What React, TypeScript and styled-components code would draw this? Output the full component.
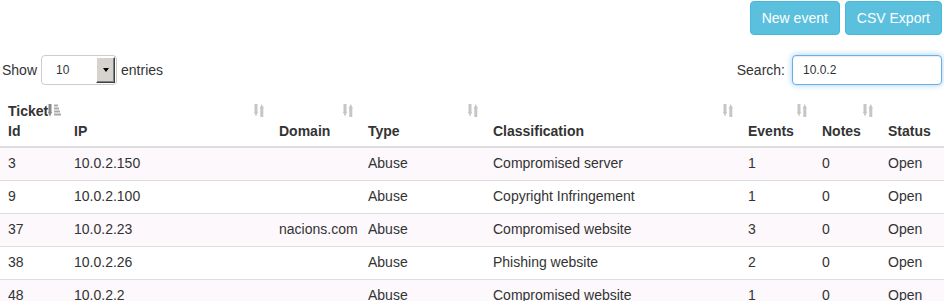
import { useEffect, useRef } from "react";
import styled, { createGlobalStyle } from "styled-components";

const GlobalStyle = createGlobalStyle`
  body {
    margin: 0;
    font-family: "Liberation Sans", Arial, Helvetica, sans-serif;
    font-size: 14px;
    color: #333;
    background: #fff;
  }
`;

const TopBar = styled.div`
  display: flex;
  justify-content: flex-end;
  gap: 5px;
  padding: 1px 2px 0;
`;

const InfoButton = styled.button`
  height: 34px;
  padding: 6px 11px;
  font-family: inherit;
  font-size: 14px;
  line-height: 20px;
  color: #fff;
  background: #5bc0de;
  border: 1px solid #46b8da;
  border-radius: 4px;
  cursor: pointer;
`;

const Controls = styled.div`
  display: flex;
  justify-content: space-between;
  align-items: center;
  height: 30px;
  margin-top: 20px;
  padding: 0 2px;
`;

const LengthControl = styled.label`
  display: flex;
  align-items: center;
  gap: 4px;
`;

const SelectBox = styled.div`
  display: flex;
  align-items: stretch;
  box-sizing: border-box;
  width: 76px;
  height: 30px;
  padding: 1px;
  border: 1px solid #ccc;
  border-radius: 4px;
  background: #fff;
  font-size: 12px;
`;

const SelectValue = styled.span`
  flex: 1;
  display: flex;
  align-items: center;
  padding-left: 13px;
`;

const SelectArrow = styled.span`
  display: flex;
  align-items: center;
  justify-content: center;
  width: 17px;
  background: #d6d3ce;
  border: 1px solid;
  border-color: #fff #404040 #404040 #fff;
  box-shadow: inset -1px -1px 0 #808080;

  &::after {
    content: "";
    border-left: 3px solid transparent;
    border-right: 3px solid transparent;
    border-top: 4px solid #000;
  }
`;

const SearchControl = styled.label`
  display: flex;
  align-items: center;
  gap: 7px;
`;

const SearchInput = styled.input`
  box-sizing: border-box;
  width: 150px;
  height: 30px;
  padding: 0 10px;
  font-family: inherit;
  font-size: 12px;
  color: #333;
  border: 1px solid #66afe9;
  border-radius: 4px;
  outline: none;
  box-shadow: inset 0 1px 1px rgba(0, 0, 0, 0.075), 0 0 6px rgba(102, 175, 233, 0.6);
`;

const Table = styled.table`
  width: 944px;
  margin-top: 6px;
  border-collapse: collapse;
  table-layout: fixed;
`;

const HeadCell = styled.th`
  position: relative;
  padding: 10px 8px 5px;
  line-height: 20px;
  text-align: left;
  vertical-align: bottom;
  font-weight: bold;
  border-bottom: 2px solid #ddd;
`;

const SortIcon = styled.svg<{ $offset: number }>`
  position: absolute;
  top: 13px;
  right: ${(p) => p.$offset}px;
`;

const Row = styled.tr`
  &:nth-child(odd) {
    background: #fcf8fc;
  }

  & + & > td {
    border-top: 1px solid #ddd;
  }
`;

const Cell = styled.td`
  padding: 7px 8px 9px;
  line-height: 16px;
  white-space: nowrap;
`;

type Column = { key: string; label: string; width: number; sort: "none" | "asc" | "off" };

const columns: Column[] = [
  { key: "id", label: "Ticket Id", width: 66, sort: "asc" },
  { key: "ip", label: "IP", width: 205, sort: "none" },
  { key: "domain", label: "Domain", width: 89, sort: "none" },
  { key: "type", label: "Type", width: 125, sort: "none" },
  { key: "classification", label: "Classification", width: 255, sort: "none" },
  { key: "events", label: "Events", width: 74, sort: "none" },
  { key: "notes", label: "Notes", width: 66, sort: "none" },
  { key: "status", label: "Status", width: 64, sort: "off" },
];

const tickets = [
  { id: 3, ip: "10.0.2.150", domain: "", type: "Abuse", classification: "Compromised server", events: 1, notes: 0, status: "Open" },
  { id: 9, ip: "10.0.2.100", domain: "", type: "Abuse", classification: "Copyright Infringement", events: 1, notes: 0, status: "Open" },
  { id: 37, ip: "10.0.2.23", domain: "nacions.com", type: "Abuse", classification: "Compromised website", events: 3, notes: 0, status: "Open" },
  { id: 38, ip: "10.0.2.26", domain: "", type: "Abuse", classification: "Phishing website", events: 2, notes: 0, status: "Open" },
  { id: 48, ip: "10.0.2.2", domain: "", type: "Abuse", classification: "Compromised website", events: 1, notes: 0, status: "Open" },
];

const Unsorted = () => (
  <SortIcon $offset={7} width="10" height="13" viewBox="0 0 10 13">
    <g fill="#c6c6c6">
      <rect x="0.5" y="0" width="3" height="9" />
      <polygon points="0,8 4,8 2,12.5" />
      <polygon points="5.5,4.5 10,4.5 7.75,0" />
      <rect x="6.3" y="4" width="3" height="9" />
    </g>
  </SortIcon>
);

const SortedAsc = () => (
  <SortIcon $offset={3} width="15" height="13" viewBox="0 0 15 13">
    <g fill="#888">
      <rect x="0.5" y="0" width="3" height="9" />
      <polygon points="0,8 4,8 2,12.5" />
    </g>
    <g fill="#aaa">
      <rect x="6" y="0.5" width="4" height="2" />
      <rect x="6" y="3.5" width="5" height="2" />
      <rect x="6" y="6.5" width="6" height="2" />
      <rect x="6" y="9.5" width="7" height="2" />
    </g>
  </SortIcon>
);

const App = () => {
  const searchRef = useRef<HTMLInputElement>(null);

  useEffect(() => {
    const el = searchRef.current;
    if (el) {
      el.focus();
      el.setSelectionRange(el.value.length, el.value.length);
    }
  }, []);

  return (
    <>
      <GlobalStyle />
      <TopBar>
        <InfoButton>New event</InfoButton>
        <InfoButton>CSV Export</InfoButton>
      </TopBar>

      <Controls>
        <LengthControl>
          Show
          <SelectBox>
            <SelectValue>10</SelectValue>
            <SelectArrow />
          </SelectBox>
          entries
        </LengthControl>
        <SearchControl>
          Search:
          <SearchInput ref={searchRef} defaultValue="10.0.2" />
        </SearchControl>
      </Controls>

      <Table>
        <colgroup>
          {columns.map((c) => (
            <col key={c.key} style={{ width: c.width }} />
          ))}
        </colgroup>
        <thead>
          <tr>
            {columns.map((c) => (
              <HeadCell key={c.key}>
                {c.key === "id" ? (
                  <>
                    Ticket
                    <br />
                    Id
                  </>
                ) : (
                  c.label
                )}
                {c.sort === "asc" && <SortedAsc />}
                {c.sort === "none" && <Unsorted />}
              </HeadCell>
            ))}
          </tr>
        </thead>
        <tbody>
          {tickets.map((t) => (
            <Row key={t.id}>
              <Cell>{t.id}</Cell>
              <Cell>{t.ip}</Cell>
              <Cell>{t.domain}</Cell>
              <Cell>{t.type}</Cell>
              <Cell>{t.classification}</Cell>
              <Cell>{t.events}</Cell>
              <Cell>{t.notes}</Cell>
              <Cell>{t.status}</Cell>
            </Row>
          ))}
        </tbody>
      </Table>
    </>
  );
};

export default App;
